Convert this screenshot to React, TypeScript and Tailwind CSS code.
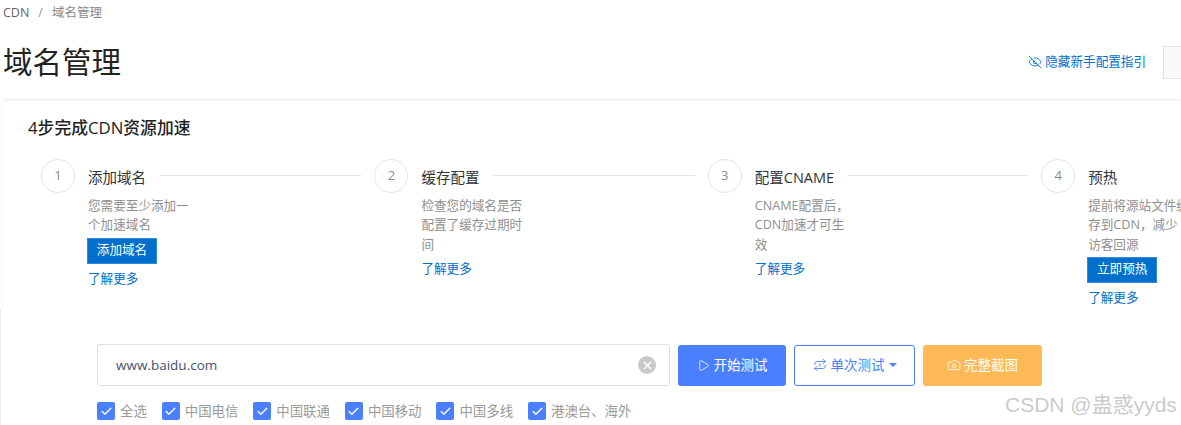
import { Check, EyeOff, Play, Repeat1, Camera, X } from 'lucide-react'

const FONT = "font-['Open_Sans','Noto_Sans_CJK_SC',sans-serif]"

const STEPS = [
  { n: 1, title: '添加域名', desc: ['您需要至少添加一', '个加速域名'], action: '添加域名' },
  { n: 2, title: '缓存配置', desc: ['检查您的域名是否', '配置了缓存过期时', '间'] },
  { n: 3, title: '配置CNAME', desc: ['CNAME配置后，', 'CDN加速才可生', '效'] },
  { n: 4, title: '预热', desc: ['提前将源站文件缓', '存到CDN，减少', '访客回源'], action: '立即预热' },
]

const CHECKS = ['全选', '中国电信', '中国联通', '中国移动', '中国多线', '港澳台、海外']

function Step({ step }: { step: (typeof STEPS)[number] }) {
  return (
    <div className="flex w-[333.4px] shrink-0 gap-[13px]">
      <div className="flex h-[34px] w-[34px] shrink-0 items-center justify-center rounded-full border border-[#e6e6e6] text-[13px] text-[#8a8a8a]">
        {step.n}
      </div>
      <div className="min-w-0 flex-1">
        <div className="flex h-[34px] items-center pr-[13px]">
          <span className="pt-[4px] text-[14.5px] leading-[30px] whitespace-nowrap text-[#333]">{step.title}</span>
          {step.n < 4 && <div className="mb-[2px] ml-[14px] h-px flex-1 bg-[#e3e3e3]" />}
        </div>
        <div className="mt-[3px] text-[12.6px] leading-[19.3px] whitespace-nowrap text-[#8f8f8f]">
          {step.desc.map(line => <div key={line}>{line}</div>)}
        </div>
        {step.action && (
          <button className="mt-[3px] -ml-px block h-[26px] w-[70px] border border-[#2f8bdc] bg-[#0070cc] text-[12.6px] text-white">
            {step.action}
          </button>
        )}
        <a className={`block text-[12.6px] leading-[18px] text-[#0070cc] ${step.action ? 'mt-[6px]' : 'mt-[6px]'}`}>了解更多</a>
      </div>
    </div>
  )
}

export default function App() {
  return (
    <div className={`relative h-[425px] w-[1181px] overflow-hidden bg-white ${FONT}`}>
      {/* CDN console part */}
      <div className="h-[308px] overflow-hidden">
        <div className="flex h-[27px] items-center gap-[9px] pl-[3px] text-[12.5px]">
          <span className="text-[#666]">CDN</span>
          <span className="text-[#999]">/</span>
          <span className="text-[#888]">域名管理</span>
        </div>
        <div className="flex h-[72px] items-center justify-between pb-[2px] pl-[3px]">
          <h1 className="text-[29.5px] leading-[40px] font-normal text-[#222]">域名管理</h1>
          <div className="flex items-center">
            <a className="flex items-center gap-[3px] text-[12.6px] text-[#0070cc]">
              <EyeOff size={14} strokeWidth={1.5} />
              隐藏新手配置指引
            </a>
            <div className="ml-[17px] h-[33px] w-[18px] border border-r-0 border-[#e3e3e3] bg-[#fafafa]" />
          </div>
        </div>
        <div className="ml-[3px] h-[260px] border-t-2 border-[#f5f5f5] pt-[15px] pl-[25px] shadow-[0_0_3px_rgba(0,0,0,0.06)]">
          <h2 className="text-[16.8px] leading-[24px] font-medium text-[#222]">4步完成CDN资源加速</h2>
          <div className="mt-[19px] ml-[13px] flex">
            {STEPS.map(s => <Step key={s.n} step={s} />)}
          </div>
        </div>
      </div>

      {/* site speed test part */}
      <div className="h-[117px] border-l border-[#eee] pt-[36px] pl-[96px]">
        <div className="flex items-center gap-[8px]">
          <div className="flex h-[42px] w-[573px] items-center justify-between rounded-[3px] border border-[#dcdfe6] pr-[13px] pl-[18px] text-[13.5px] text-[#45526b]">
            www.baidu.com
            <span className="flex h-[18px] w-[18px] items-center justify-center rounded-full bg-[#c9c9c9] text-white">
              <X size={13} strokeWidth={2.5} />
            </span>
          </div>
          <button className="flex h-[41px] w-[108px] items-center justify-center gap-[4px] rounded-[3px] bg-[#4a80ff] text-[13.5px] text-white">
            <Play size={13} strokeWidth={1.5} />
            开始测试
          </button>
          <button className="flex h-[41px] w-[121px] items-center justify-center gap-[4px] rounded-[3px] border border-[#4a80ff] text-[13.5px] text-[#4a80ff]">
            <Repeat1 size={14} strokeWidth={1.5} />
            单次测试
            <span className="h-0 w-0 border-x-[4px] border-t-[4px] border-x-transparent border-t-[#4a80ff]" />
          </button>
          <button className="flex h-[41px] w-[119px] items-center justify-center gap-[3px] rounded-[3px] bg-[#ffb957] text-[13.5px] text-white">
            <Camera size={14} strokeWidth={1.5} />
            完整截图
          </button>
        </div>
        <div className="mt-[15px] flex gap-[15px]">
          {CHECKS.map(label => (
            <label key={label} className="flex items-center gap-[5px] text-[13.4px] leading-[20px] text-[#9a9a9a]">
              <span className="flex h-[18px] w-[18px] items-center justify-center rounded-[2px] bg-[#4a80ff] text-white">
                <Check size={13} strokeWidth={2.5} />
              </span>
              {label}
            </label>
          ))}
        </div>
      </div>

      {/* watermark */}
      <div className="absolute top-[393px] left-[1005px] font-['Liberation_Sans','Noto_Sans_CJK_SC',sans-serif] text-[21px] leading-[24px] whitespace-nowrap text-[#cbcbcb]">
        CSDN @蛊惑yyds
      </div>
    </div>
  )
}
